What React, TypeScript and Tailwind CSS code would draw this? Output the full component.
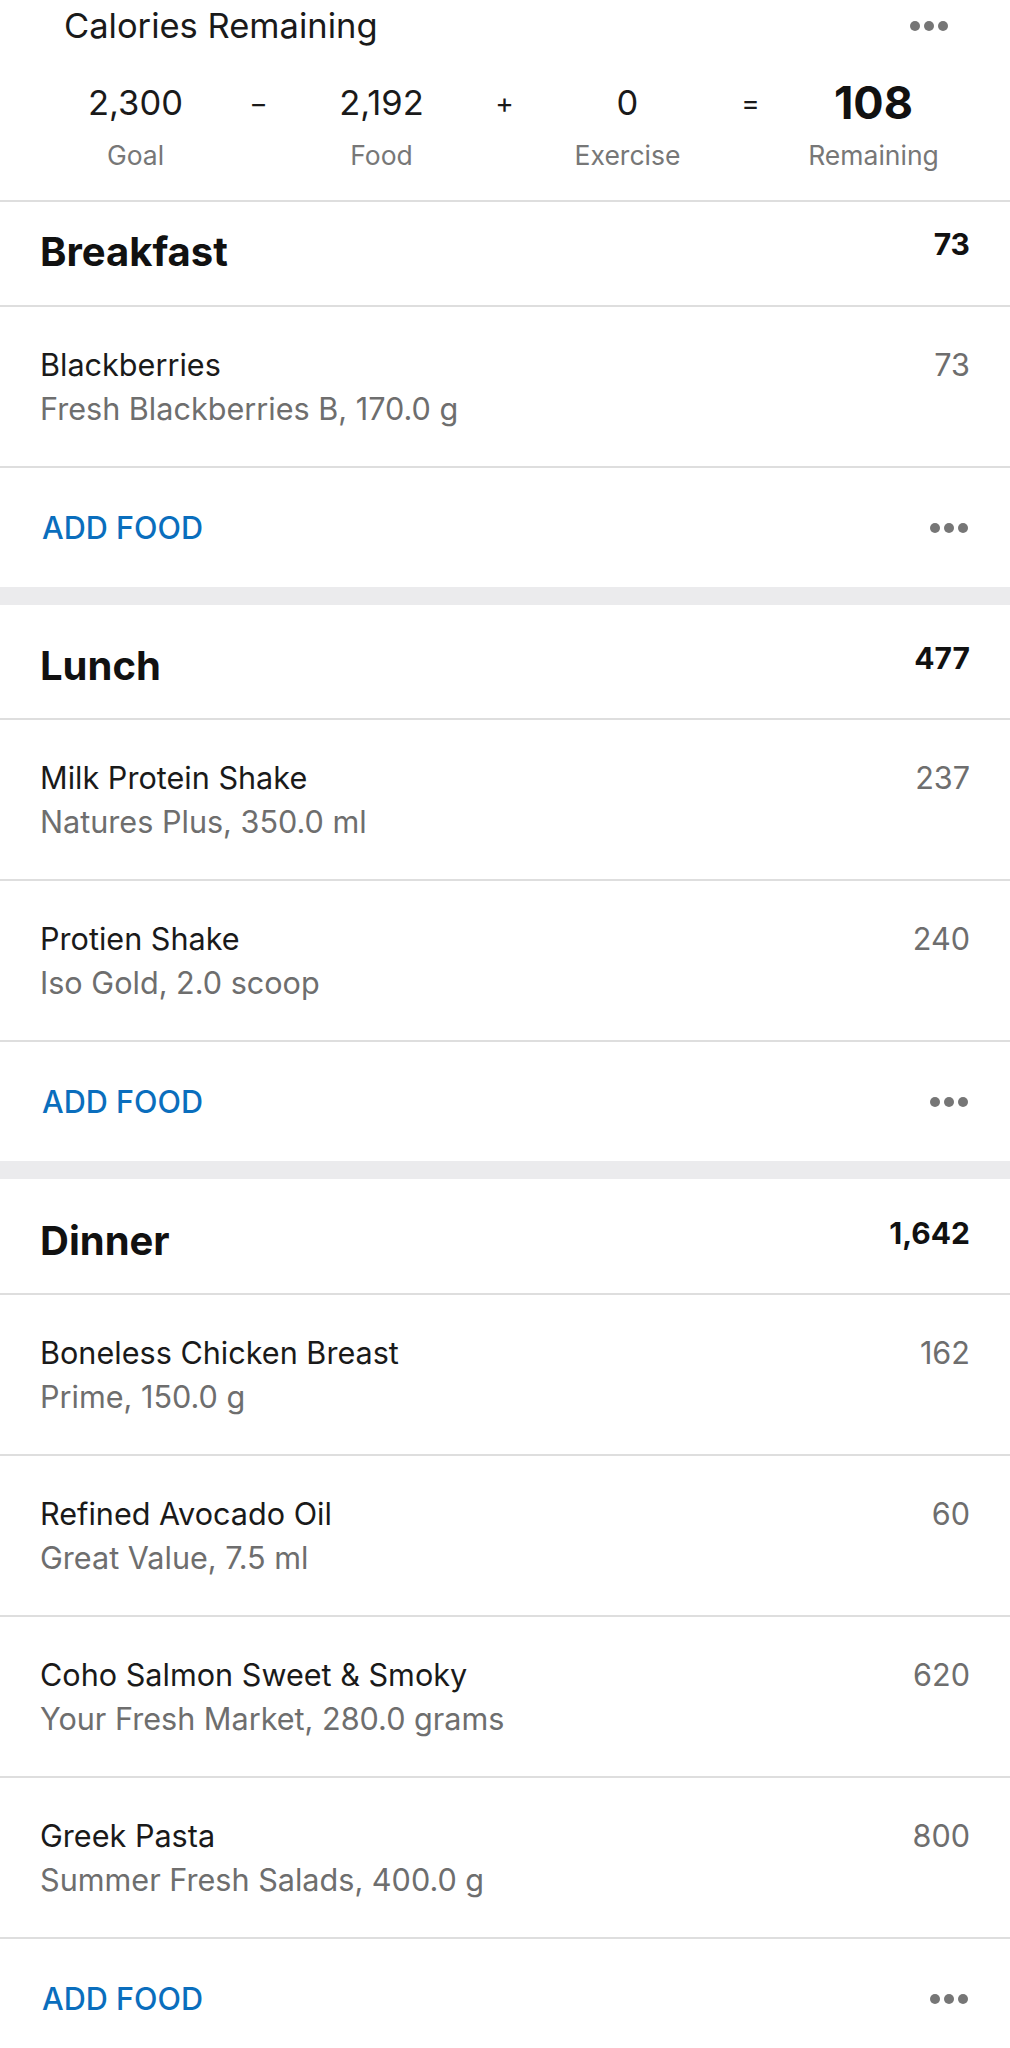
import React from "react";

type Food = { name: string; detail: string; cal: string };
type Meal = { title: string; total: string; foods: Food[]; first?: boolean; last?: boolean };

const meals: Meal[] = [
  {
    title: "Breakfast",
    total: "73",
    first: true,
    foods: [{ name: "Blackberries", detail: "Fresh Blackberries B, 170.0 g", cal: "73" }],
  },
  {
    title: "Lunch",
    total: "477",
    foods: [
      { name: "Milk Protein Shake", detail: "Natures Plus, 350.0 ml", cal: "237" },
      { name: "Protien Shake", detail: "Iso Gold, 2.0 scoop", cal: "240" },
    ],
  },
  {
    title: "Dinner",
    total: "1,642",
    last: true,
    foods: [
      { name: "Boneless Chicken Breast", detail: "Prime, 150.0 g", cal: "162" },
      { name: "Refined Avocado Oil", detail: "Great Value, 7.5 ml", cal: "60" },
      { name: "Coho Salmon Sweet & Smoky", detail: "Your Fresh Market, 280.0 grams", cal: "620" },
      { name: "Greek Pasta", detail: "Summer Fresh Salads, 400.0 g", cal: "800" },
    ],
  },
];

function Dots() {
  return (
    <div className="flex items-center gap-[4px]">
      <span className="h-[10px] w-[10px] rounded-full bg-[#767676]" />
      <span className="h-[10px] w-[10px] rounded-full bg-[#767676]" />
      <span className="h-[10px] w-[10px] rounded-full bg-[#767676]" />
    </div>
  );
}

function Summary() {
  const cols = [
    { v: "2,300", l: "Goal" },
    { op: "−" },
    { v: "2,192", l: "Food" },
    { op: "+" },
    { v: "0", l: "Exercise" },
    { op: "=" },
    { v: "108", l: "Remaining", bold: true },
  ];
  return (
    <section className="border-b-2 border-[#dedede] pt-[6px] pb-[29px]">
      <div className="flex h-[40px] items-center justify-between pl-[64px] pr-[62px]">
        <h1 className="text-[34.5px] leading-[40px] text-[#1a1a1a]">Calories Remaining</h1>
        <Dots />
      </div>
      <div className="mt-[37px] grid grid-cols-[repeat(7,123px)] pl-[74px]">
        {cols.map((c, i) =>
          c.op ? (
            <div key={i} className="flex h-[40px] items-center justify-center text-[28px] text-[#1a1a1a]">
              {c.op}
            </div>
          ) : (
            <div key={i} className="flex flex-col items-center">
              <span
                className={
                  c.bold
                    ? "h-[40px] text-[45px] leading-[40px] font-bold text-[#111]"
                    : "h-[40px] text-[34.5px] leading-[40px] text-[#1a1a1a]"
                }
              >
                {c.v}
              </span>
              <span className="mt-[16px] text-[26.5px] leading-[32px] text-[#777]">{c.l}</span>
            </div>
          )
        )}
      </div>
    </section>
  );
}

function MealBlock({ meal }: { meal: Meal }) {
  const pad = meal.first ? "pt-[26px] pb-[29px]" : meal.last ? "pt-[38px] pb-[28px]" : "pt-[37px] pb-[28px]";
  return (
    <section>
      <div className={"flex items-start justify-between border-b-2 border-[#dedede] px-[40px] " + pad}>
        <h2 className="text-[40px] leading-[48px] font-bold text-[#111]">{meal.title}</h2>
        <span className="text-[30px] leading-[32px] font-bold text-[#111]">{meal.total}</span>
      </div>
      {meal.foods.map((f) => (
        <div
          key={f.name}
          className="flex items-start justify-between border-b-2 border-[#dedede] px-[40px] pt-[36px] pb-[35px]"
        >
          <div className="flex flex-col">
            <span className="text-[30.6px] leading-[44px] text-[#1a1a1a]">{f.name}</span>
            <span className="text-[30.6px] leading-[44px] text-[#6e6e6e]">{f.detail}</span>
          </div>
          <span className="text-[30.6px] leading-[44px] text-[#6e6e6e]">{f.cal}</span>
        </div>
      ))}
      <div className="flex h-[119px] items-center justify-between pl-[42px] pr-[42px]">
        <span className="text-[30.6px] font-medium text-[#0a6ebd]">ADD FOOD</span>
        <Dots />
      </div>
      <div className="h-[18px] bg-[#ebebed]" />
    </section>
  );
}

export default function App() {
  return (
    <div className="min-h-screen w-full bg-white font-['Inter',sans-serif]">
      <Summary />
      {meals.map((m) => (
        <MealBlock key={m.title} meal={m} />
      ))}
    </div>
  );
}
